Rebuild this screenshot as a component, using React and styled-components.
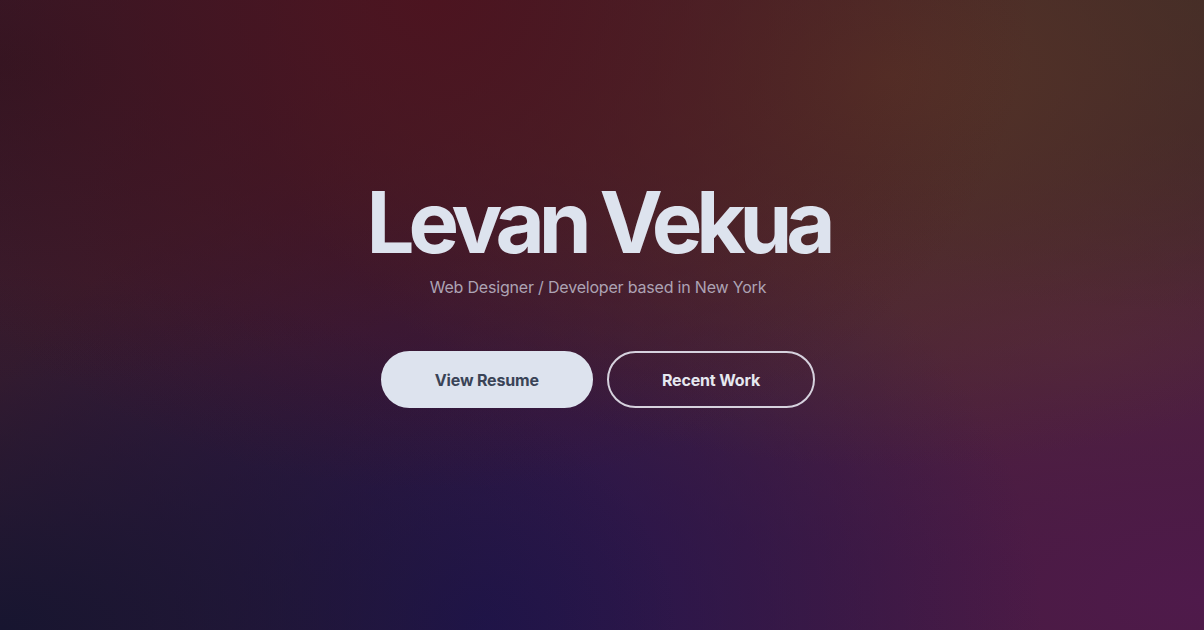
import styled, { createGlobalStyle } from "styled-components";

const GlobalStyle = createGlobalStyle`
  * {
    box-sizing: border-box;
  }
  html,
  body {
    margin: 0;
    height: 100%;
  }
  body {
    font-family: Inter, "Noto Sans", sans-serif;
    -webkit-font-smoothing: antialiased;
  }
`;

export default function App() {
  return (
    <>
      <GlobalStyle />
      <Hero>
        <Name>Levan Vekua</Name>
        <Tagline>Web Designer / Developer based in New York</Tagline>
        <Actions>
          <Button $variant="solid">View Resume</Button>
          <Button $variant="outline">Recent Work</Button>
        </Actions>
      </Hero>
    </>
  );
}

const Hero = styled.main`
  min-height: 100vh;
  display: flex;
  flex-direction: column;
  align-items: center;
  justify-content: center;
  padding: 0 8px 42px 0;
  background-color: #3d1d2f;
  background-image:
    radial-gradient(at 36% 0%, #4c1420 0px, transparent 55%),
    radial-gradient(at 74% 12%, #553327 0px, transparent 50%),
    radial-gradient(at 100% 0%, #3a2a27 0px, transparent 35%),
    radial-gradient(at 0% 10%, #2e1522 0px, transparent 40%),
    radial-gradient(at 0% 100%, #171530 0px, transparent 40%),
    radial-gradient(at 40% 100%, #221451 0px, transparent 55%),
    radial-gradient(at 100% 95%, #4f1a4b 0px, transparent 55%),
    radial-gradient(at 90% 55%, #532a35 0px, transparent 45%);
`;

const Name = styled.h1`
  margin: 0;
  font-size: 85px;
  line-height: 1;
  font-weight: 700;
  letter-spacing: -0.072em;
  color: #dde3ee;
`;

const Tagline = styled.p`
  margin: 10px 0 0;
  font-size: 16px;
  line-height: 24px;
  letter-spacing: -0.012em;
  color: #ada3b4;
`;

const Actions = styled.div`
  display: flex;
  gap: 14px;
  margin-top: 52px;
`;

const Button = styled.button`
  height: 57px;
  padding: 0 ${({ $variant }) => ($variant === "solid" ? "52px" : "53px")};
  border-radius: 999px;
  font-family: inherit;
  font-size: 16px;
  font-weight: 700;
  letter-spacing: -0.01em;
  cursor: pointer;
  border: 2px solid ${({ $variant }) => ($variant === "solid" ? "#dde3ee" : "#d6d2de")};
  background: ${({ $variant }) => ($variant === "solid" ? "#dde3ee" : "transparent")};
  color: ${({ $variant }) => ($variant === "solid" ? "#3a4457" : "#e6e8f0")};
`;
